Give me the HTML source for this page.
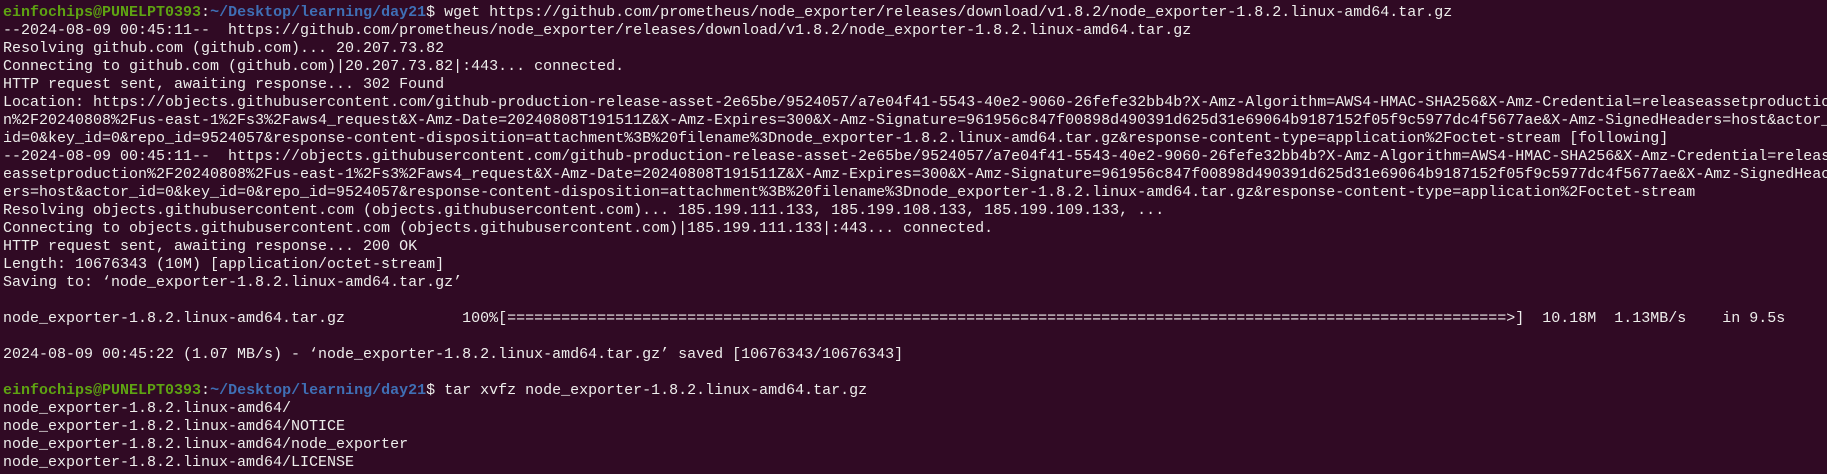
<!DOCTYPE html>
<html><head><meta charset="utf-8"><style>
html,body{margin:0;padding:0;background:#300a24;width:1827px;height:474px;overflow:hidden}
pre{margin:0;padding:4px 0 0 3px;font-family:"Liberation Mono",monospace;font-size:15px;line-height:18px;color:#eeeeec;white-space:pre;overflow:hidden}
.g{color:#5ea312;font-weight:bold}
.b{color:#3f6fb5;font-weight:bold}
</style></head><body><pre><span class="g">einfochips@PUNELPT0393</span>:<span class="b">~/Desktop/learning/day21</span>$ wget https://github.com/prometheus/node_exporter/releases/download/v1.8.2/node_exporter-1.8.2.linux-amd64.tar.gz
--2024-08-09 00:45:11--  https://github.com/prometheus/node_exporter/releases/download/v1.8.2/node_exporter-1.8.2.linux-amd64.tar.gz
Resolving github.com (github.com)... 20.207.73.82
Connecting to github.com (github.com)|20.207.73.82|:443... connected.
HTTP request sent, awaiting response... 302 Found
Location: https://objects.githubusercontent.com/github-production-release-asset-2e65be/9524057/a7e04f41-5543-40e2-9060-26fefe32bb4b?X-Amz-Algorithm=AWS4-HMAC-SHA256&amp;X-Amz-Credential=releaseassetproductio
n%2F20240808%2Fus-east-1%2Fs3%2Faws4_request&amp;X-Amz-Date=20240808T191511Z&amp;X-Amz-Expires=300&amp;X-Amz-Signature=961956c847f00898d490391d625d31e69064b9187152f05f9c5977dc4f5677ae&amp;X-Amz-SignedHeaders=host&amp;actor_
id=0&amp;key_id=0&amp;repo_id=9524057&amp;response-content-disposition=attachment%3B%20filename%3Dnode_exporter-1.8.2.linux-amd64.tar.gz&amp;response-content-type=application%2Foctet-stream [following]
--2024-08-09 00:45:11--  https://objects.githubusercontent.com/github-production-release-asset-2e65be/9524057/a7e04f41-5543-40e2-9060-26fefe32bb4b?X-Amz-Algorithm=AWS4-HMAC-SHA256&amp;X-Amz-Credential=releas
eassetproduction%2F20240808%2Fus-east-1%2Fs3%2Faws4_request&amp;X-Amz-Date=20240808T191511Z&amp;X-Amz-Expires=300&amp;X-Amz-Signature=961956c847f00898d490391d625d31e69064b9187152f05f9c5977dc4f5677ae&amp;X-Amz-SignedHeac
ers=host&amp;actor_id=0&amp;key_id=0&amp;repo_id=9524057&amp;response-content-disposition=attachment%3B%20filename%3Dnode_exporter-1.8.2.linux-amd64.tar.gz&amp;response-content-type=application%2Foctet-stream
Resolving objects.githubusercontent.com (objects.githubusercontent.com)... 185.199.111.133, 185.199.108.133, 185.199.109.133, ...
Connecting to objects.githubusercontent.com (objects.githubusercontent.com)|185.199.111.133|:443... connected.
HTTP request sent, awaiting response... 200 OK
Length: 10676343 (10M) [application/octet-stream]
Saving to: ‘node_exporter-1.8.2.linux-amd64.tar.gz’

node_exporter-1.8.2.linux-amd64.tar.gz             100%[===============================================================================================================>]  10.18M  1.13MB/s    in 9.5s

2024-08-09 00:45:22 (1.07 MB/s) - ‘node_exporter-1.8.2.linux-amd64.tar.gz’ saved [10676343/10676343]

<span class="g">einfochips@PUNELPT0393</span>:<span class="b">~/Desktop/learning/day21</span>$ tar xvfz node_exporter-1.8.2.linux-amd64.tar.gz
node_exporter-1.8.2.linux-amd64/
node_exporter-1.8.2.linux-amd64/NOTICE
node_exporter-1.8.2.linux-amd64/node_exporter
node_exporter-1.8.2.linux-amd64/LICENSE
</pre></body></html>
